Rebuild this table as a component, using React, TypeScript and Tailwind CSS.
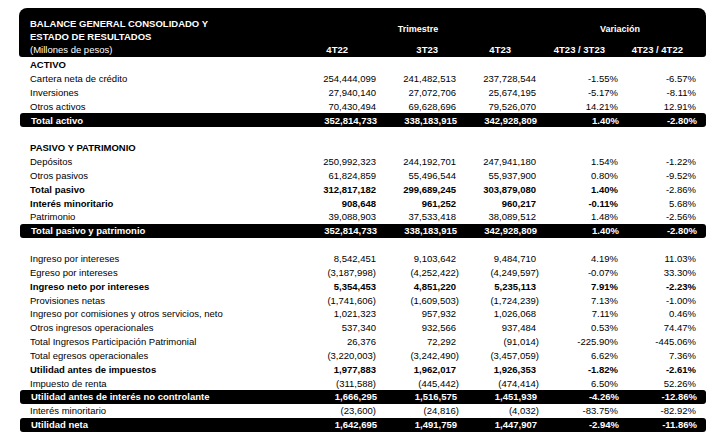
type Row = {
  label: string;
  values?: string[];
  kind?: "section" | "bold" | "bar" | "blank";
  // how many value columns are bold on a "bold" row
  boldCols?: number;
};

const rows: Row[] = [
  { label: "ACTIVO", kind: "section" },
  { label: "Cartera neta de crédito", values: ["254,444,099", "241,482,513", "237,728,544", "-1.55%", "-6.57%"] },
  { label: "Inversiones", values: ["27,940,140", "27,072,706", "25,674,195", "-5.17%", "-8.11%"] },
  { label: "Otros activos", values: ["70,430,494", "69,628,696", "79,526,070", "14.21%", "12.91%"] },
  { label: "Total activo", kind: "bar", values: ["352,814,733", "338,183,915", "342,928,809", "1.40%", "-2.80%"] },
  { label: "", kind: "blank" },
  { label: "PASIVO Y PATRIMONIO", kind: "section" },
  { label: "Depósitos", values: ["250,992,323", "244,192,701", "247,941,180", "1.54%", "-1.22%"] },
  { label: "Otros pasivos", values: ["61,824,859", "55,496,544", "55,937,900", "0.80%", "-9.52%"] },
  { label: "Total pasivo", kind: "bold", boldCols: 4, values: ["312,817,182", "299,689,245", "303,879,080", "1.40%", "-2.86%"] },
  { label: "Interés minoritario", kind: "bold", boldCols: 4, values: ["908,648", "961,252", "960,217", "-0.11%", "5.68%"] },
  { label: "Patrimonio", values: ["39,088,903", "37,533,418", "38,089,512", "1.48%", "-2.56%"] },
  { label: "Total pasivo y patrimonio", kind: "bar", values: ["352,814,733", "338,183,915", "342,928,809", "1.40%", "-2.80%"] },
  { label: "", kind: "blank" },
  { label: "Ingreso por intereses", values: ["8,542,451", "9,103,642", "9,484,710", "4.19%", "11.03%"] },
  { label: "Egreso por intereses", values: ["(3,187,998)", "(4,252,422)", "(4,249,597)", "-0.07%", "33.30%"] },
  { label: "Ingreso neto por intereses", kind: "bold", boldCols: 5, values: ["5,354,453", "4,851,220", "5,235,113", "7.91%", "-2.23%"] },
  { label: "Provisiones netas", values: ["(1,741,606)", "(1,609,503)", "(1,724,239)", "7.13%", "-1.00%"] },
  { label: "Ingreso por comisiones y otros servicios, neto", values: ["1,021,323", "957,932", "1,026,068", "7.11%", "0.46%"] },
  { label: "Otros ingresos operacionales", values: ["537,340", "932,566", "937,484", "0.53%", "74.47%"] },
  { label: "Total Ingresos Participación Patrimonial", values: ["26,376", "72,292", "(91,014)", "-225.90%", "-445.06%"] },
  { label: "Total egresos operacionales", values: ["(3,220,003)", "(3,242,490)", "(3,457,059)", "6.62%", "7.36%"] },
  { label: "Utilidad antes de impuestos", kind: "bold", boldCols: 5, values: ["1,977,883", "1,962,017", "1,926,353", "-1.82%", "-2.61%"] },
  { label: "Impuesto de renta", values: ["(311,588)", "(445,442)", "(474,414)", "6.50%", "52.26%"] },
  { label: "Utilidad antes de interés no controlante", kind: "bar", values: ["1,666,295", "1,516,575", "1,451,939", "-4.26%", "-12.86%"] },
  { label: "Interés minoritario", values: ["(23,600)", "(24,816)", "(4,032)", "-83.75%", "-82.92%"] },
  { label: "Utilidad neta", kind: "bar", values: ["1,642,695", "1,491,759", "1,447,907", "-2.94%", "-11.86%"] },
];

const cols = "grid grid-cols-[266px_80px_80px_80px_82px_78px]";

function TableRow({ row }: { row: Row }) {
  if (row.kind === "blank") return <div className="h-[13.85px]" />;

  const isBar = row.kind === "bar";
  const labelBold = isBar || row.kind === "bold" || row.kind === "section";
  const boldCols = isBar ? 5 : row.boldCols ?? 0;

  return (
    <div
      className={`${cols} h-[13.85px] items-center pl-[11px] leading-none ${
        isBar ? "bg-black text-white rounded-[3px] ml-[1px] pl-[10px]" : ""
      }`}
    >
      <div className={labelBold ? "font-bold" : ""}>{row.label}</div>
      {(row.values ?? []).map((v, i) => (
        <div
          key={i}
          className={`text-right ${i < boldCols ? "font-bold" : ""} ${
            (i === 1 || i === 2) && v.startsWith("(") ? "-mr-[3px]" : ""
          }`}
        >
          {v}
        </div>
      ))}
    </div>
  );
}

export default function App() {
  return (
    <div className="w-[726px] h-[444px] bg-white text-black text-[9.5px] font-['Liberation_Sans',Arial,sans-serif] pt-[8px] pl-[19px] overflow-hidden">
      <div className="w-[687px]">
        <div className="bg-black text-white rounded-t-[8px] rounded-b-[3px] h-[49px] pl-[11px] flex">
          <div className="w-[266px] pt-[9px] font-bold">
            <div className="h-[13px] leading-[13px]">BALANCE GENERAL CONSOLIDADO Y</div>
            <div className="h-[13px] leading-[13px]">ESTADO DE RESULTADOS</div>
            <div className="h-[14px] leading-[14px] font-normal">(Millones de pesos)</div>
          </div>
          <div className="w-[400px] pt-[15px] font-bold">
            <div className="grid grid-cols-[240px_160px] h-[13px] leading-[13px] text-[9px]">
              <div className="text-center pl-[4px]">Trimestre</div>
              <div className="text-center pl-[8px]">Variación</div>
            </div>
            <div className="grid grid-cols-[80px_80px_80px_82px_78px] mt-[7px] h-[14px] leading-[14px]">
              <div className="text-right pr-[28px]">4T22</div>
              <div className="text-right pr-[18px]">3T23</div>
              <div className="text-right pr-[25px]">4T23</div>
              <div className="text-right pr-[13px]">4T23 / 3T23</div>
              <div className="text-right pr-[13px]">4T23 / 4T22</div>
            </div>
          </div>
        </div>
        <div className="mt-[1px]">
          {rows.map((r, i) => (
            <TableRow key={i} row={r} />
          ))}
        </div>
      </div>
    </div>
  );
}
